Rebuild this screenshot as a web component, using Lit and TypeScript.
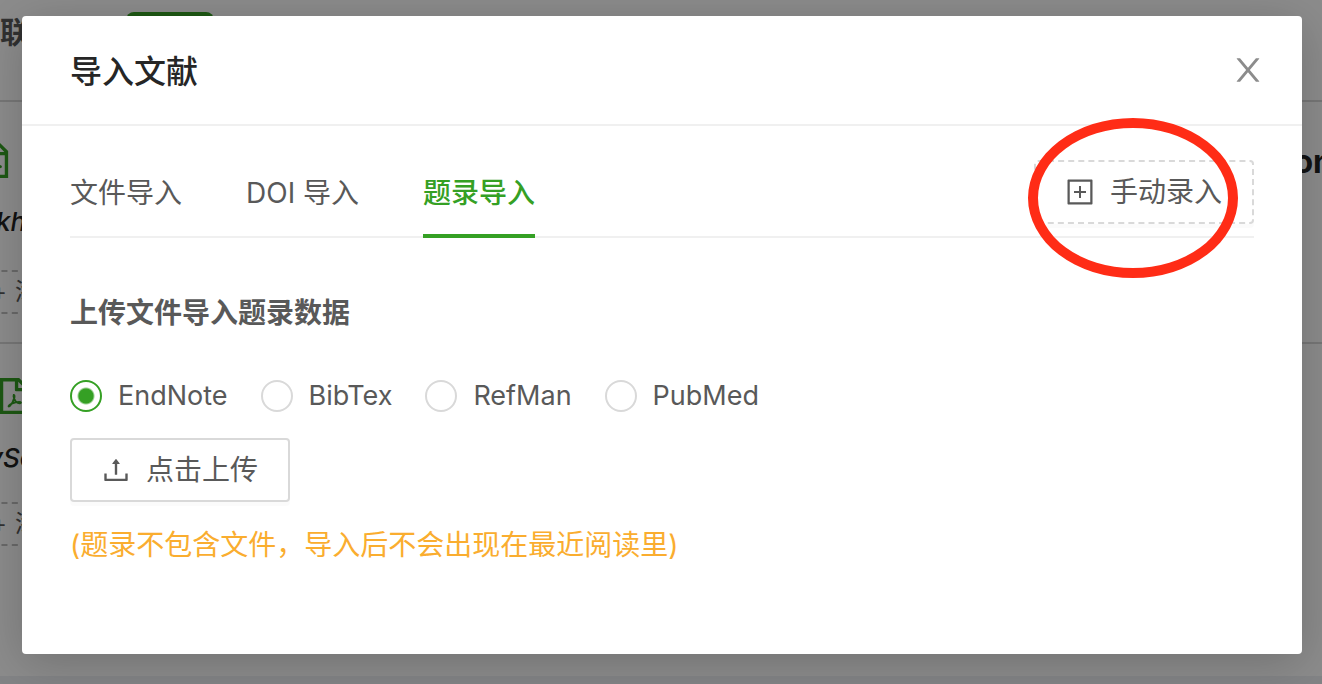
import { LitElement, html, css, svg } from "lit";
import { customElement, state } from "lit/decorators.js";

const ICONS = {
  close: svg`<path d="M563.8 512l262.5-312.9c4.4-5.2.7-13.1-6.1-13.1h-79.8c-4.7 0-9.2 2.1-12.3 5.7L511.6 449.8 295.1 191.7c-3-3.6-7.5-5.7-12.3-5.7H203c-6.8 0-10.5 7.9-6.1 13.1L459.4 512 196.9 824.9A7.95 7.95 0 00203 838h79.8c4.7 0 9.2-2.1 12.3-5.7l216.5-258.1 216.5 258.1c3 3.6 7.5 5.7 12.3 5.7h79.8c6.8 0 10.5-7.9 6.1-13.1L563.8 512z"/>`,
  plusSquare: svg`<path d="M328 544h152v152c0 4.4 3.6 8 8 8h48c4.4 0 8-3.6 8-8V544h152c4.4 0 8-3.6 8-8v-48c0-4.4-3.6-8-8-8H544V328c0-4.4-3.6-8-8-8h-48c-4.4 0-8 3.6-8 8v152H328c-4.4 0-8 3.6-8 8v48c0 4.4 3.6 8 8 8z"/><path d="M880 112H144c-17.7 0-32 14.3-32 32v736c0 17.7 14.3 32 32 32h736c17.7 0 32-14.3 32-32V144c0-17.7-14.3-32-32-32zm-40 728H184V184h656v656z"/>`,
  upload: svg`<path d="M400 317.7h73.9V656c0 4.4 3.6 8 8 8h60c4.4 0 8-3.6 8-8V317.7H624c6.7 0 10.4-7.7 6.3-12.9L518.3 163a8 8 0 00-12.6 0l-112 141.7c-4.1 5.3-.4 13 6.3 13zM878 626h-60c-4.4 0-8 3.6-8 8v154H214V634c0-4.4-3.6-8-8-8h-60c-4.4 0-8 3.6-8 8v198c0 17.7 14.3 32 32 32h684c17.7 0 32-14.3 32-32V634c0-4.4-3.6-8-8-8z"/>`,
  pdf: svg`<path d="M864 288.6L639.4 64H160v896h704V288.6zM768 310H618V160L768 310zm12 566H244V148h290v216a32 32 0 0032 32h214v480z"/><path fill="none" stroke="currentColor" stroke-width="48" d="M506 485c-14 20 0 68 14 105 16 42 48 78 88 94 34 14 80 10 76-10-5-22-74-18-132-4-66 16-150 52-172 88-10 20 14 22 36-4 40-46 88-136 104-200 8-36 2-74-14-69z"/>`,
};

const icon = (name: keyof typeof ICONS, cls: string) =>
  html`<svg class="icon ${cls}" viewBox="64 64 896 896" aria-hidden="true">${ICONS[name]}</svg>`;

const FORMATS = ["EndNote", "BibTex", "RefMan", "PubMed"];
const TABS = ["文件导入", "DOI 导入", "题录导入"];

@customElement("library-page")
class LibraryPage extends LitElement {
  static styles = css`
    :host {
      display: block;
      min-height: 100vh;
      overflow: hidden;
      background: #eff1f4;
      color: #595959;
      font: 28px/44px Inter, "Noto Sans CJK SC", sans-serif;
    }
    .nav {
      display: flex;
      align-items: flex-start;
      box-sizing: border-box;
      height: 102px;
      padding-top: 12px;
      background: #fff;
      border-bottom: 2px solid #d9d9d9;
    }
    .nav-title { width: 126px; font-size: 30px; line-height: 40px; font-weight: 700; }
    .nav-mark { width: 88px; height: 8px; border-radius: 8px 8px 0 0; background: #35a024; }
    .item {
      box-sizing: border-box;
      height: 242px;
      padding-top: 40px;
      background: #fff;
      border-bottom: 2px solid #d9d9d9;
      overflow: hidden;
    }
    .item.last { height: 332px; padding-top: 34px; border-bottom: 0; }
    .head { display: flex; justify-content: space-between; height: 36px; }
    .icon { display: block; width: 36px; height: 36px; fill: currentColor; }
    .pdf { color: #35a024; margin-left: -24px; }
    .last .pdf { margin-left: -4px; }
    .title { margin-right: -11px; color: #222; font: 700 32px/40px Inter, sans-serif; }
    .journal {
      margin: 22px 0 0 -4px;
      color: #222;
      font: italic 500 26px/44px Inter, sans-serif;
    }
    .last .journal { margin-left: -12px; }
    .tag {
      display: flex;
      gap: 8px;
      box-sizing: border-box;
      width: 120px;
      height: 44px;
      margin: 26px 0 0 -40px;
      padding-left: 29px;
      border: 2px dashed #bfbfbf;
      font-size: 24px;
      line-height: 40px;
      white-space: nowrap;
    }
    .last .tag { margin-top: 22px; }
  `;
  render() {
    return html`
      <header class="nav"><div class="nav-title">联</div><div class="nav-mark"></div></header>
      <article class="item">
        <div class="head">${icon("pdf", "pdf")}<div class="title">on</div></div>
        <div class="journal">kh</div>
        <div class="tag"><span>+</span><span>添</span></div>
      </article>
      <article class="item last">
        <div class="head">${icon("pdf", "pdf")}</div>
        <div class="journal">ySc</div>
        <div class="tag"><span>+</span><span>添</span></div>
      </article>
    `;
  }
}

@customElement("import-dialog")
class ImportDialog extends LitElement {
  @state() format = "EndNote";
  @state() tab = 2;

  static styles = css`
    :host {
      display: block;
      border-radius: 4px;
      background: #fff;
      box-shadow: 0 8px 48px rgba(0, 0, 0, 0.2);
      color: #595959;
      font: 28px/44px Inter, "Noto Sans CJK SC", sans-serif;
    }
    button { font: inherit; color: inherit; background: none; border: 0; padding: 0; cursor: pointer; }
    h2, h3, p { margin: 0; }
    .icon { display: block; flex: none; width: 28px; height: 28px; fill: currentColor; }
    .header {
      display: flex;
      justify-content: space-between;
      align-items: flex-start;
      padding: 32px 38px 28px 48px;
      border-bottom: 2px solid #f0f0f0;
    }
    .header h2 { font-size: 32px; line-height: 48px; font-weight: 500; color: #262626; }
    .close { padding: 6px 0; color: #8c8c8c; }
    .close .icon { width: 32px; height: 32px; }
    .body { padding: 20px 48px 86px; }
    .bar {
      display: flex;
      justify-content: space-between;
      align-items: center;
      box-shadow: inset 0 -2px #f0f0f0;
    }
    .tabs { display: flex; gap: 64px; }
    .tab { padding: 24px 0 18px; line-height: 46px; border-bottom: 4px solid transparent; }
    .tab.on { color: #35a024; border-color: #35a024; font-weight: 500; }
    .extra { position: relative; }
    .btn {
      display: flex;
      align-items: center;
      gap: 16px;
      box-sizing: border-box;
      height: 64px;
      padding: 0 30px;
      border: 2px solid #d9d9d9;
      border-radius: 4px;
      box-shadow: 0 4px 0 rgba(0, 0, 0, 0.016);
    }
    .btn.dashed { border-style: dashed; }
    .ring {
      position: absolute;
      left: -6px;
      top: -42px;
      box-sizing: border-box;
      width: 210px;
      height: 160px;
      border: 10px solid #ff2c16;
      border-radius: 50%;
      pointer-events: none;
    }
    h3 { margin-top: 52px; font-size: 28px; line-height: 46px; font-weight: 700; }
    .formats { display: flex; flex-wrap: wrap; gap: 33px; margin: 38px 0 20px; padding: 0; border: 0; font-size: 27px; }
    .format { display: flex; align-items: center; gap: 16px; cursor: pointer; }
    .format input {
      appearance: none;
      flex: none;
      width: 32px;
      height: 32px;
      margin: 0;
      border: 2px solid #d9d9d9;
      border-radius: 50%;
    }
    .format input:checked {
      border-color: #35a024;
      background: radial-gradient(circle, #35a024 7px, #fff 9px);
    }
    .note { margin-top: 20px; line-height: 46px; color: #faad2f; }
  `;

  render() {
    return html`
      <div class="header">
        <h2>导入文献</h2>
        <button class="close" aria-label="关闭">${icon("close", "")}</button>
      </div>
      <div class="body">
        <div class="bar">
          <div class="tabs" role="tablist">
            ${TABS.map(
              (t, i) => html`<button
                class="tab ${i === this.tab ? "on" : ""}"
                role="tab"
                aria-selected=${i === this.tab}
                @click=${() => (this.tab = i)}
              >${t}</button>`
            )}
          </div>
          <div class="extra">
            <button class="btn dashed">${icon("plusSquare", "")}<span>手动录入</span></button>
            <div class="ring"></div>
          </div>
        </div>
        <h3>上传文件导入题录数据</h3>
        <fieldset class="formats">
          ${FORMATS.map(
            (f) => html`<label class="format"><input
                type="radio"
                name="format"
                .checked=${f === this.format}
                @change=${() => (this.format = f)}
              /><span>${f}</span></label>`
          )}
        </fieldset>
        <button class="btn">${icon("upload", "")}<span>点击上传</span></button>
        <p class="note">(题录不包含文件，导入后不会出现在最近阅读里)</p>
      </div>
    `;
  }
}

@customElement("app-root")
class AppRoot extends LitElement {
  static styles = css`
    :host { display: block; position: relative; min-height: 100vh; overflow: hidden; }
    .mask {
      position: absolute;
      inset: 0;
      padding: 16px 20px 30px 22px;
      background: rgba(0, 0, 0, 0.45);
    }
  `;
  render() {
    return html`
      <library-page></library-page>
      <div class="mask"><import-dialog role="dialog" aria-modal="true" aria-label="导入文献"></import-dialog></div>
    `;
  }
}
